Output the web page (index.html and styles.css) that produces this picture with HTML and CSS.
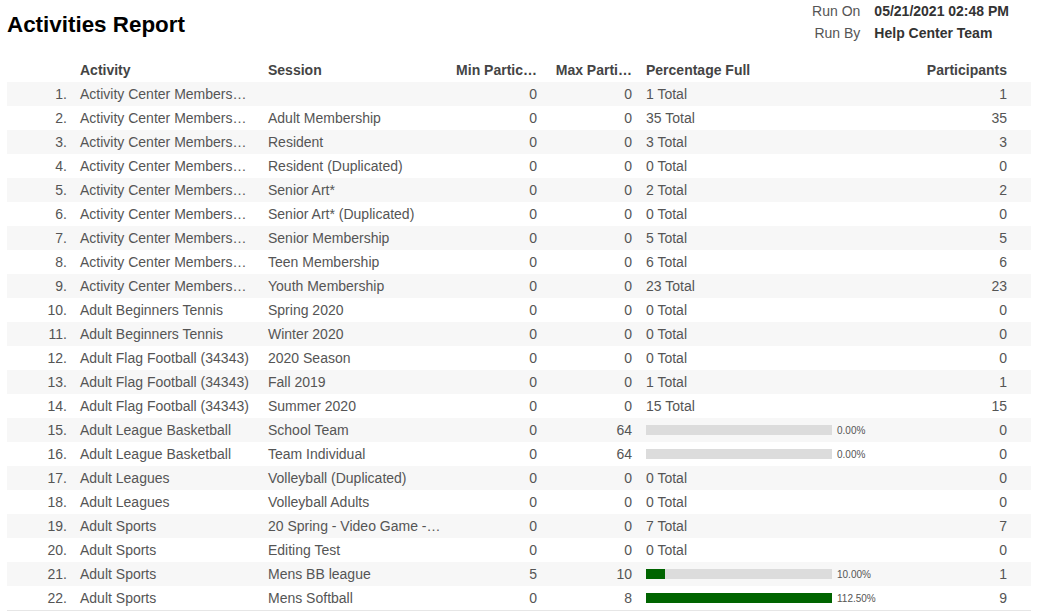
FILE: index.html
```html
<!DOCTYPE html>
<html>
<head>
<meta charset="utf-8">
<link rel="stylesheet" href="styles.css">
</head>
<body>
<div class="page">
  <header class="top">
    <h1 class="title">Activities Report</h1>
    <dl class="meta">
      <dt>Run On</dt><dd>05/21/2021 02:48 PM</dd>
      <dt>Run By</dt><dd>Help Center Team</dd>
    </dl>
  </header>
  <table class="report">
    <colgroup>
      <col class="c-num"><col class="c-act"><col class="c-ses"><col class="c-min"><col class="c-max"><col class="c-pct"><col class="c-par">
    </colgroup>
    <thead>
      <tr><th></th><th class="l">Activity</th><th class="l">Session</th><th class="r">Min Partic…</th><th class="r">Max Parti…</th><th class="l">Percentage Full</th><th class="r">Participants</th></tr>
    </thead>
    <tbody>
      <tr><td class="r">1.</td><td>Activity Center Members…</td><td></td><td class="r">0</td><td class="r">0</td><td>1 Total</td><td class="r">1</td></tr>
      <tr><td class="r">2.</td><td>Activity Center Members…</td><td>Adult Membership</td><td class="r">0</td><td class="r">0</td><td>35 Total</td><td class="r">35</td></tr>
      <tr><td class="r">3.</td><td>Activity Center Members…</td><td>Resident</td><td class="r">0</td><td class="r">0</td><td>3 Total</td><td class="r">3</td></tr>
      <tr><td class="r">4.</td><td>Activity Center Members…</td><td>Resident (Duplicated)</td><td class="r">0</td><td class="r">0</td><td>0 Total</td><td class="r">0</td></tr>
      <tr><td class="r">5.</td><td>Activity Center Members…</td><td>Senior Art*</td><td class="r">0</td><td class="r">0</td><td>2 Total</td><td class="r">2</td></tr>
      <tr><td class="r">6.</td><td>Activity Center Members…</td><td>Senior Art* (Duplicated)</td><td class="r">0</td><td class="r">0</td><td>0 Total</td><td class="r">0</td></tr>
      <tr><td class="r">7.</td><td>Activity Center Members…</td><td>Senior Membership</td><td class="r">0</td><td class="r">0</td><td>5 Total</td><td class="r">5</td></tr>
      <tr><td class="r">8.</td><td>Activity Center Members…</td><td>Teen Membership</td><td class="r">0</td><td class="r">0</td><td>6 Total</td><td class="r">6</td></tr>
      <tr><td class="r">9.</td><td>Activity Center Members…</td><td>Youth Membership</td><td class="r">0</td><td class="r">0</td><td>23 Total</td><td class="r">23</td></tr>
      <tr><td class="r">10.</td><td>Adult Beginners Tennis</td><td>Spring 2020</td><td class="r">0</td><td class="r">0</td><td>0 Total</td><td class="r">0</td></tr>
      <tr><td class="r">11.</td><td>Adult Beginners Tennis</td><td>Winter 2020</td><td class="r">0</td><td class="r">0</td><td>0 Total</td><td class="r">0</td></tr>
      <tr><td class="r">12.</td><td>Adult Flag Football (34343)</td><td>2020 Season</td><td class="r">0</td><td class="r">0</td><td>0 Total</td><td class="r">0</td></tr>
      <tr><td class="r">13.</td><td>Adult Flag Football (34343)</td><td>Fall 2019</td><td class="r">0</td><td class="r">0</td><td>1 Total</td><td class="r">1</td></tr>
      <tr><td class="r">14.</td><td>Adult Flag Football (34343)</td><td>Summer 2020</td><td class="r">0</td><td class="r">0</td><td>15 Total</td><td class="r">15</td></tr>
      <tr><td class="r">15.</td><td>Adult League Basketball</td><td>School Team</td><td class="r">0</td><td class="r">64</td><td><div class="pct"><div class="bar"><div class="fill" style="width:0%"></div></div><span class="plabel">0.00%</span></div></td><td class="r">0</td></tr>
      <tr><td class="r">16.</td><td>Adult League Basketball</td><td>Team Individual</td><td class="r">0</td><td class="r">64</td><td><div class="pct"><div class="bar"><div class="fill" style="width:0%"></div></div><span class="plabel">0.00%</span></div></td><td class="r">0</td></tr>
      <tr><td class="r">17.</td><td>Adult Leagues</td><td>Volleyball (Duplicated)</td><td class="r">0</td><td class="r">0</td><td>0 Total</td><td class="r">0</td></tr>
      <tr><td class="r">18.</td><td>Adult Leagues</td><td>Volleyball Adults</td><td class="r">0</td><td class="r">0</td><td>0 Total</td><td class="r">0</td></tr>
      <tr><td class="r">19.</td><td>Adult Sports</td><td>20 Spring - Video Game -…</td><td class="r">0</td><td class="r">0</td><td>7 Total</td><td class="r">7</td></tr>
      <tr><td class="r">20.</td><td>Adult Sports</td><td>Editing Test</td><td class="r">0</td><td class="r">0</td><td>0 Total</td><td class="r">0</td></tr>
      <tr><td class="r">21.</td><td>Adult Sports</td><td>Mens BB league</td><td class="r">5</td><td class="r">10</td><td><div class="pct"><div class="bar"><div class="fill" style="width:10%"></div></div><span class="plabel">10.00%</span></div></td><td class="r">1</td></tr>
      <tr><td class="r">22.</td><td>Adult Sports</td><td>Mens Softball</td><td class="r">0</td><td class="r">8</td><td><div class="pct"><div class="bar"><div class="fill" style="width:100%"></div></div><span class="plabel">112.50%</span></div></td><td class="r">9</td></tr>
    </tbody>
  </table>
</div>
</body>
</html>
```
FILE: styles.css
```css
html, body {
  margin: 0;
  padding: 0;
  background: #fff;
}
body {
  font-family: "Liberation Sans", Arial, sans-serif;
  color: #555;
}
.page {
  padding: 0 7px;
}
.top {
  display: flex;
  justify-content: space-between;
  align-items: flex-start;
  height: 58px;
}
.title {
  margin: 12px 0 0 0;
  font-size: 22.4px;
  font-weight: bold;
  color: #000;
  line-height: 26px;
}
.meta {
  margin: 0 22px 0 0;
  display: grid;
  grid-template-columns: auto auto;
  column-gap: 14px;
  line-height: 22px;
}
.meta dt {
  text-align: right;
  font-size: 14px;
  color: #555;
}
.meta dd {
  margin: 0;
  font-size: 14px;
  font-weight: bold;
  color: #333;
}
.report {
  width: 1024px;
  border-collapse: collapse;
  table-layout: fixed;
  font-size: 14px;
  border-bottom: 1px solid #e6e6e6;
}
.c-num { width: 66px; }
.c-act { width: 188px; }
.c-ses { width: 188px; }
.c-min { width: 95px; }
.c-max { width: 95px; }
.c-pct { width: 261px; }
.c-par { width: 131px; }
.report th, .report td {
  height: 24px;
  padding: 0 7px;
  white-space: nowrap;
  overflow: hidden;
  text-overflow: ellipsis;
}
.report th {
  font-weight: bold;
  color: #444;
  text-align: left;
}
.report th:last-child, .report td:last-child {
  padding-right: 24px;
}
.report .r { text-align: right; }
.report .l { text-align: left; }
.report tbody tr:nth-child(odd) {
  background: #f7f7f7;
}
.report td:first-child {
  padding-right: 6px;
}
.pct {
  display: flex;
  align-items: center;
  gap: 5px;
}
.bar {
  width: 186px;
  height: 10px;
  background: #dcdcdc;
  flex: none;
}
.fill {
  height: 100%;
  background: #006400;
}
.plabel {
  font-size: 10px;
  color: #555;
}
```
